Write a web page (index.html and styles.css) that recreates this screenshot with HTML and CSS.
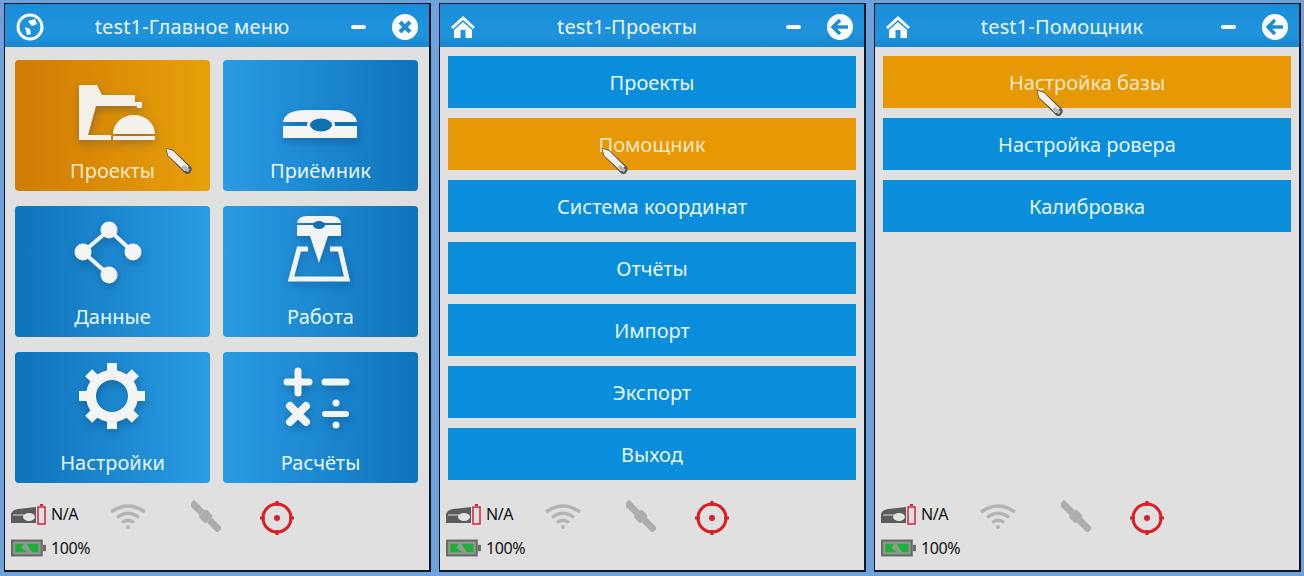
FILE: index.html
```html
<!DOCTYPE html>
<html lang="en">
<head>
    <meta charset="UTF-8">
    <title>test1</title>
    <link rel="stylesheet" href="styles.css">
</head>
<body>
    <svg class="defs" width="0" height="0">
        <defs>
            <symbol id="stylus" viewBox="0 0 30 30">
                <path d="M1 1 L9 3 L28 21 Q30 23 29 25 L27 28 Q25 30 22 28 L3 9 Z" fill="#50585c"/>
                <path d="M2 2 L9 4 L26 21 L22 26 L4 9 Z" fill="#f1efe8"/>
                <path d="M21 19 L27 24 L25 27 L18 22 Z" fill="#b9b7ae"/>
            </symbol>
            <symbol id="home" viewBox="0 0 24 24">
                <path d="M12 1 L24 12 L22 14 L12 5 L2 14 L0 12 Z" fill="#fff"/>
                <path fill-rule="evenodd" d="M12 7 L21 15 V23 H3 V15 Z M9.5 15 V23 H14.5 V15 Z" fill="#fff"/>
            </symbol>
            <symbol id="back" viewBox="0 0 26 26">
                <circle cx="13" cy="13" r="13" fill="#fff"/>
                <path d="M13 6 L6 13 L13 20 M7 13 H21" fill="none" stroke="#1a8ed8" stroke-width="3.4"/>
            </symbol>
            <symbol id="rover-state" viewBox="0 0 36 22">
                <path d="M0 11 Q1 7 7 6 L25 4 V20 H0 Z" fill="#5c5c5c"/>
                <path d="M2 12 H13" stroke="#dedede" stroke-width="1"/>
                <ellipse cx="18" cy="14" rx="6" ry="4" fill="#e4e4e4"/>
                <rect x="27" y="4" width="7" height="17" fill="none" stroke="#d8223a" stroke-width="1.5"/>
                <rect x="29" y="1" width="3" height="2" fill="#d8223a"/>
            </symbol>
            <symbol id="battery" viewBox="0 0 34 16">
                <rect x="1" y="1" width="28" height="14" fill="#8f9b8f" stroke="#6a6a6a" stroke-width="2"/>
                <path d="M4 4 H12 L10 8 L15 12 H4 Z M15 4 H26 V12 H20 L17 8 Z" fill="#1fae3a"/>
                <rect x="30" y="5" width="3" height="6" fill="#6a6a6a"/>
            </symbol>
            <symbol id="wifi" viewBox="0 0 36 26">
                <g fill="none" stroke="#b4b4b4" stroke-width="3.4">
                    <path d="M1 9 Q18 -3 35 9"/>
                    <path d="M7 14.5 Q18 6 29 14.5"/>
                    <path d="M12 19.5 Q18 15 24 19.5"/>
                </g>
                <circle cx="18" cy="24" r="2" fill="#b4b4b4"/>
            </symbol>
            <symbol id="satellite" viewBox="0 0 30 32">
                <g fill="#adadad" transform="rotate(-45 15 16)">
                    <rect x="11" y="-4" width="7" height="15"/>
                    <rect x="9" y="11" width="11" height="10" rx="2"/>
                    <rect x="11" y="21" width="7" height="15"/>
                </g>
            </symbol>
            <symbol id="target" viewBox="0 0 36 36">
                <circle cx="18" cy="18" r="14" fill="none" stroke="#d81f26" stroke-width="3"/>
                <circle cx="18" cy="18" r="3" fill="#d81f26"/>
                <path d="M18 1 V6 M18 30 V35 M1 18 H6 M30 18 H35" stroke="#d81f26" stroke-width="3"/>
            </symbol>
        </defs>
    </svg>

    <div class="desktop">
        <!-- Main menu -->
        <section class="window">
            <header class="titlebar">
                <svg class="title-icon icon-globe" viewBox="0 0 28 28">
                    <circle cx="14" cy="14" r="12" fill="none" stroke="#fff" stroke-width="3"/>
                    <path d="M12 8 L19 6 L21 11 L16 13 L14 11 Z M9 14 L14 16 L15 21 L11 22 Z" fill="#fff"/>
                </svg>
                <h1 class="title">test1-Главное меню</h1>
                <span class="minimize"></span>
                <svg class="title-icon" viewBox="0 0 26 26">
                    <circle cx="13" cy="13" r="13" fill="#fff"/>
                    <path d="M8 8 L18 18 M18 8 L8 18" stroke="#1a8ed8" stroke-width="4"/>
                </svg>
            </header>
            <div class="tiles">
                <a class="tile tile-active">
                    <svg class="tile-icon" viewBox="0 0 100 90">
                        <path fill-rule="evenodd" d="M17 20 H34 L39 30 H72 V37 H79 V43 H74 V41 H33 L25 70 H48 V75 H17 Q16 75 16 74 V21 Q16 20 17 20 Z" fill="#f4f1ea"/>
                        <path d="M50 69 A21 19 0 0 1 92 69 Z" fill="#f4f1ea"/>
                        <rect x="50" y="71" width="42" height="4" fill="#f4f1ea"/>
                    </svg>
                    <span class="tile-label">Проекты</span>
                    <svg class="stylus stylus-tile"><use href="#stylus"/></svg>
                </a>
                <a class="tile tile-dark-right">
                    <svg class="tile-icon" viewBox="0 0 100 90">
                        <path d="M12 57 Q14 45 35 45 H63 Q84 45 86 57 Z" fill="#f2f4f6"/>
                        <rect x="12" y="61" width="74" height="12" fill="#f2f4f6"/>
                        <ellipse cx="50" cy="60" rx="14" ry="8.5" fill="#f2f4f6"/>
                        <ellipse cx="50" cy="60" rx="11" ry="6.5" fill="#0f70b4"/>
                    </svg>
                    <span class="tile-label">Приёмник</span>
                </a>
                <a class="tile">
                    <svg class="tile-icon" viewBox="0 0 100 90">
                        <path d="M46 19 L20 41 L46 64 M46 19 L70 41" fill="none" stroke="#f2f4f6" stroke-width="4"/>
                        <circle cx="46" cy="19" r="8.5" fill="#f2f4f6"/>
                        <circle cx="20" cy="41" r="8.5" fill="#f2f4f6"/>
                        <circle cx="70" cy="41" r="8.5" fill="#f2f4f6"/>
                        <circle cx="46" cy="64" r="8.5" fill="#f2f4f6"/>
                    </svg>
                    <span class="tile-label">Данные</span>
                </a>
                <a class="tile tile-dark-right">
                    <svg class="tile-icon" viewBox="0 0 100 90">
                        <path d="M37 38 H28 L20 68 H76 L69 38 H59" fill="none" stroke="#f2f4f6" stroke-width="5"/>
                        <path d="M26 12 Q27 5 36 5 H60 Q69 5 70 12 H26 Z" fill="#f2f4f6"/>
                        <path d="M26 14 H70 V25 H57 L48 52 L39 25 H26 Z" fill="#f2f4f6"/>
                        <ellipse cx="48" cy="14" rx="6" ry="4" fill="#0f70b4"/>
                    </svg>
                    <span class="tile-label">Работа</span>
                </a>
                <a class="tile">
                    <svg class="tile-icon" viewBox="0 0 100 90">
                        <g fill="#f2f4f6">
                            <rect x="44" y="6" width="10" height="12"/>
                            <rect x="44" y="60" width="10" height="12"/>
                            <rect x="16" y="34" width="12" height="10"/>
                            <rect x="70" y="34" width="12" height="10"/>
                            <rect x="44" y="6" width="10" height="12" transform="rotate(45 49 39)"/>
                            <rect x="44" y="6" width="10" height="12" transform="rotate(135 49 39)"/>
                            <rect x="44" y="6" width="10" height="12" transform="rotate(225 49 39)"/>
                            <rect x="44" y="6" width="10" height="12" transform="rotate(315 49 39)"/>
                        </g>
                        <circle cx="49" cy="39" r="21" fill="none" stroke="#f2f4f6" stroke-width="10"/>
                    </svg>
                    <span class="tile-label">Настройки</span>
                </a>
                <a class="tile tile-dark-right">
                    <svg class="tile-icon" viewBox="0 0 100 90">
                        <g stroke="#f2f4f6" stroke-linecap="round" fill="none">
                            <path d="M27 14 V36 M16 25 H38" stroke-width="7"/>
                            <path d="M54 25 H75" stroke-width="7"/>
                            <path d="M19 49 L35 65 M35 49 L19 65" stroke-width="8"/>
                            <path d="M54 57 H75" stroke-width="6"/>
                        </g>
                        <circle cx="65" cy="46" r="3.5" fill="#f2f4f6"/>
                        <circle cx="65" cy="68" r="3.5" fill="#f2f4f6"/>
                    </svg>
                    <span class="tile-label">Расчёты</span>
                </a>
            </div>
            <footer class="status">
                <div class="status-left">
                    <div class="status-row"><svg class="state-icon"><use href="#rover-state"/></svg><span>N/A</span></div>
                    <div class="status-row status-battery"><svg class="state-icon"><use href="#battery"/></svg><span class="percent">100%</span></div>
                </div>
                <svg class="icon-wifi"><use href="#wifi"/></svg>
                <svg class="icon-satellite"><use href="#satellite"/></svg>
                <svg class="icon-target"><use href="#target"/></svg>
            </footer>
        </section>

        <!-- Projects -->
        <section class="window">
            <header class="titlebar">
                <svg class="title-icon icon-home"><use href="#home"/></svg>
                <h1 class="title">test1-Проекты</h1>
                <span class="minimize"></span>
                <svg class="title-icon"><use href="#back"/></svg>
            </header>
            <div class="menu">
                <a class="menu-item">Проекты</a>
                <a class="menu-item menu-item-active">Помощник<svg class="stylus stylus-helper"><use href="#stylus"/></svg></a>
                <a class="menu-item">Система координат</a>
                <a class="menu-item">Отчёты</a>
                <a class="menu-item">Импорт</a>
                <a class="menu-item">Экспорт</a>
                <a class="menu-item">Выход</a>
            </div>
            <footer class="status">
                <div class="status-left">
                    <div class="status-row"><svg class="state-icon"><use href="#rover-state"/></svg><span>N/A</span></div>
                    <div class="status-row status-battery"><svg class="state-icon"><use href="#battery"/></svg><span class="percent">100%</span></div>
                </div>
                <svg class="icon-wifi"><use href="#wifi"/></svg>
                <svg class="icon-satellite"><use href="#satellite"/></svg>
                <svg class="icon-target"><use href="#target"/></svg>
            </footer>
        </section>

        <!-- Helper -->
        <section class="window">
            <header class="titlebar">
                <svg class="title-icon icon-home"><use href="#home"/></svg>
                <h1 class="title">test1-Помощник</h1>
                <span class="minimize"></span>
                <svg class="title-icon"><use href="#back"/></svg>
            </header>
            <div class="menu">
                <a class="menu-item menu-item-active">Настройка базы<svg class="stylus stylus-base"><use href="#stylus"/></svg></a>
                <a class="menu-item">Настройка ровера</a>
                <a class="menu-item">Калибровка</a>
            </div>
            <footer class="status">
                <div class="status-left">
                    <div class="status-row"><svg class="state-icon"><use href="#rover-state"/></svg><span>N/A</span></div>
                    <div class="status-row status-battery"><svg class="state-icon"><use href="#battery"/></svg><span class="percent">100%</span></div>
                </div>
                <svg class="icon-wifi"><use href="#wifi"/></svg>
                <svg class="icon-satellite"><use href="#satellite"/></svg>
                <svg class="icon-target"><use href="#target"/></svg>
            </footer>
        </section>
    </div>
</body>
</html>
```

FILE: styles.css
```css
body {
    margin: 0;
    background-color: #6fa2da;
    font-family: "Noto Sans", sans-serif;
    overflow: hidden;
}

.defs {
    position: absolute;
}

.desktop {
    display: flex;
    gap: 8px;
    padding: 3px 0 0 4px;
}

.window {
    display: flex;
    flex-direction: column;
    box-sizing: border-box;
    width: 427px;
    height: 569px;
    background-color: #e0e0e0;
    border: 1px solid #0b1722;
    border-width: 1px 2px 2px 1px;
}

/* Title bar */
.titlebar {
    display: flex;
    align-items: center;
    flex-shrink: 0;
    box-sizing: border-box;
    height: 43px;
    padding: 3px 11px 0 11px;
    background: linear-gradient(#1a8dd8, #1f94dd 70%, #1787d2);
    color: #e6f6ff;
}

.title {
    flex: 1;
    margin: -2px 0 0 -9px;
    font-size: 20px;
    font-weight: 400;
    letter-spacing: 0.15px;
    text-align: center;
}

.title-icon {
    width: 26px;
    height: 26px;
    flex-shrink: 0;
}

.icon-globe {
    width: 28px;
    height: 28px;
    margin-right: -2px;
}

.icon-home {
    width: 24px;
    height: 24px;
    margin: 0 2px 0 0;
}

.minimize {
    width: 15px;
    height: 4px;
    margin-right: 26px;
    border-radius: 2px;
    background-color: #fff;
}

/* Main menu tiles */
.tiles {
    display: grid;
    grid-template-columns: 195px 195px;
    grid-auto-rows: 131px;
    gap: 15px 13px;
    padding: 13px 0 0 10px;
}

.tile {
    position: relative;
    display: flex;
    flex-direction: column;
    align-items: center;
    border-radius: 4px;
    background: linear-gradient(90deg, #0e74bb, #2a9be4);
    color: #e6f6ff;
    font-size: 20px;
}

.tile-dark-right {
    background: linear-gradient(90deg, #2a9be4, #0e74bb);
}

.tile-active {
    background: linear-gradient(90deg, #d07b04, #e8a00a);
    color: #f8e8c8;
}

.tile-icon {
    width: 100px;
    height: 90px;
    margin-top: 5px;
    filter: drop-shadow(1px 4px 4px rgba(0, 40, 90, 0.3));
}

.tile-label {
    margin-top: 2px;
    line-height: 27px;
}

/* List menus */
.menu {
    display: flex;
    flex-direction: column;
    gap: 10px;
    padding: 9px 8px 0 8px;
}

.menu-item {
    position: relative;
    height: 52px;
    line-height: 53px;
    background-color: #0a8edb;
    color: #e6f6ff;
    font-size: 20px;
    text-align: center;
}

.menu-item-active {
    background-color: #e79805;
    color: #f8e8c8;
}

/* Stylus cursor */
.stylus {
    position: absolute;
    width: 29px;
    height: 28px;
}

.stylus-tile {
    left: 149px;
    top: 87px;
}

.stylus-helper {
    left: 152px;
    top: 29px;
}

.stylus-base {
    left: 152px;
    top: 33px;
}

/* Status bar */
.status {
    display: flex;
    align-items: flex-start;
    margin-top: auto;
    padding: 0 0 11px 6px;
    font-size: 16px;
    color: #111;
}

.status-left {
    width: 99px;
}

.status-row {
    display: flex;
    align-items: center;
    gap: 4px;
    height: 22px;
    letter-spacing: -0.4px;
}

.status-battery {
    margin-top: 12px;
}

.state-icon {
    width: 36px;
    height: 22px;
}

.percent {
    width: 41px;
    overflow: hidden;
    white-space: nowrap;
}

.icon-wifi {
    width: 36px;
    height: 26px;
}

.icon-satellite {
    width: 30px;
    height: 32px;
    margin-left: 45px;
    margin-top: -3px;
}

.icon-target {
    width: 36px;
    height: 36px;
    margin-left: 38px;
    margin-top: -3px;
}
```
